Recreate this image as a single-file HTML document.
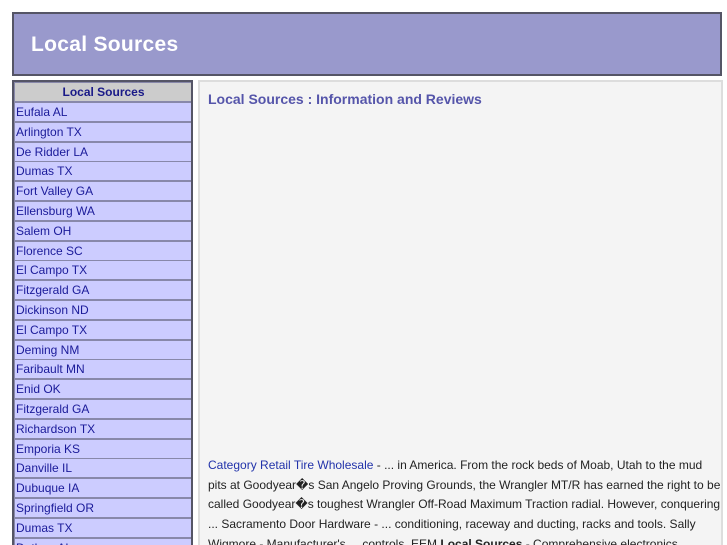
<!DOCTYPE html>
<html style="overflow:hidden;height:545px"><head><style>
body{margin:0;background:#fff;font-family:"Liberation Sans",sans-serif;width:727px;height:545px;overflow:hidden;position:relative}
#hd{position:absolute;left:12px;top:12px;width:706px;height:60px;background:#9999cc;border:2px solid #555566}
#hd h1{margin:0;position:absolute;left:17px;top:19px;font-size:21px;color:#fff;font-weight:bold;letter-spacing:0.3px}
#sb{position:absolute;left:12px;top:80px;width:177px;height:463px;border:2px solid #555566;border-bottom:none;background:#9999bb;overflow:hidden}
.r{position:absolute;left:0;width:175px;height:18px;border:1px solid #8888aa;background:#ccccff;color:#1a1a99;font-size:12px;line-height:18px;padding-left:1px;box-sizing:content-box}
.h{background:#cccccc;text-align:center;font-weight:bold;color:#1a1a88}
#ct{position:absolute;left:198px;top:80px;width:521px;height:463px;background:#f4f4f4;border:2px solid #dddddd;border-bottom:none;overflow:hidden}
#ct h2{margin:0;position:absolute;left:8px;top:9px;font-size:14px;color:#5555aa}
#ct p{position:absolute;left:8px;top:374px;width:514px;margin:0;font-size:12px;line-height:19.7px;color:#222}
#ct a{color:#2233aa;text-decoration:none}
</style></head><body>
<div id="hd"><h1>Local Sources</h1></div>
<div id="sb">
<div class="r h" style="top:0">Local Sources</div>
<div class="r" style="top:20px">Eufala AL</div>
<div class="r" style="top:39.8px">Arlington TX</div>
<div class="r" style="top:59.6px">De Ridder LA</div>
<div class="r" style="top:79.4px">Dumas TX</div>
<div class="r" style="top:99.2px">Fort Valley GA</div>
<div class="r" style="top:119px">Ellensburg WA</div>
<div class="r" style="top:138.8px">Salem OH</div>
<div class="r" style="top:158.6px">Florence SC</div>
<div class="r" style="top:178.4px">El Campo TX</div>
<div class="r" style="top:198.2px">Fitzgerald GA</div>
<div class="r" style="top:218px">Dickinson ND</div>
<div class="r" style="top:237.8px">El Campo TX</div>
<div class="r" style="top:257.6px">Deming NM</div>
<div class="r" style="top:277.4px">Faribault MN</div>
<div class="r" style="top:297.2px">Enid OK</div>
<div class="r" style="top:317px">Fitzgerald GA</div>
<div class="r" style="top:336.8px">Richardson TX</div>
<div class="r" style="top:356.6px">Emporia KS</div>
<div class="r" style="top:376.4px">Danville IL</div>
<div class="r" style="top:396.2px">Dubuque IA</div>
<div class="r" style="top:416px">Springfield OR</div>
<div class="r" style="top:435.8px">Dumas TX</div>
<div class="r" style="top:455.6px">Dothan AL</div>
</div>
<div id="ct">
<h2>Local Sources : Information and Reviews</h2>
<p><a>Category Retail Tire Wholesale</a> - ... in America. From the rock beds of Moab, Utah to the mud pits at Goodyear�s San Angelo Proving Grounds, the Wrangler MT/R has earned the right to be called Goodyear�s toughest Wrangler Off-Road Maximum Traction radial. However, conquering ... Sacramento Door Hardware - ... conditioning, raceway and ducting, racks and tools. Sally Wigmore - Manufacturer's ... controls. EEM <b>Local Sources</b> - Comprehensive electronics distributor sourcing for both local and national distributors covering thousands of manufacturers.</p>
</div>
</body></html>
